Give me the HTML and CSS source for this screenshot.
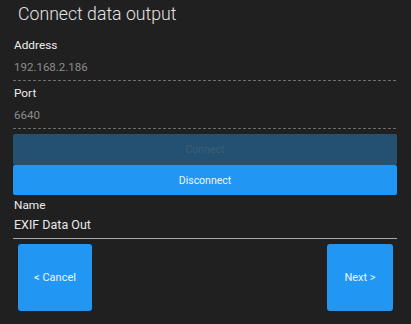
FILE: index.html
```html
<!DOCTYPE html>
<html>
<head>
<meta charset="utf-8">
<link rel="stylesheet" href="styles.css">
</head>
<body>
<div class="page">
  <div class="title">Connect data output</div>
  <div class="form">
    <div class="field dashed">
      <div class="label">Address</div>
      <div class="value">192.168.2.186</div>
    </div>
    <div class="field dashed">
      <div class="label">Port</div>
      <div class="value">6640</div>
    </div>
    <div class="actions">
      <div class="btn connect">Connect</div>
      <div class="btn disconnect">Disconnect</div>
    </div>
    <div class="field solid">
      <div class="label">Name</div>
      <div class="value name">EXIF Data Out</div>
    </div>
    <div class="nav">
      <div class="navbtn cancel">&lt; Cancel</div>
      <div class="navbtn next">Next &gt;</div>
    </div>
  </div>
</div>
</body>
</html>
```
FILE: styles.css
```css
html, body {
  margin: 0;
  padding: 0;
  background: #202020;
}
body {
  width: 411px;
  height: 324px;
  overflow: hidden;
  font-family: "Roboto", "Open Sans", sans-serif;
  color: #e8e8e8;
}
.title {
  height: 35px;
  line-height: 28px;
  padding-left: 18px;
  font-size: 17.7px;
  font-weight: 300;
  color: #e4e4e4;
}
.form {
  padding: 0 14px 0 13px;
}
.field {
  padding-bottom: 3px;
}
.dashed {
  background-image: repeating-linear-gradient(to right, #6e6e6e 0 3px, transparent 3px 5px);
  background-size: 100% 1px;
  background-repeat: no-repeat;
  background-position: left bottom;
  padding-bottom: 4px;
}
.dashed + .dashed {
  margin-top: 2px;
}
.solid {
  border-bottom: 1px solid #a8a8a8;
}
.label {
  line-height: 20px;
  font-size: 11.8px;
  padding-left: 1px;
  color: #ececec;
}
.value {
  line-height: 20px;
  margin-top: 2px;
  font-size: 11.5px;
  padding-left: 1px;
  color: #8c8c8c;
}
.value.name {
  margin-top: 0;
  font-size: 12.5px;
  color: #e8e8e8;
}
.actions {
  margin-top: 5px;
  display: flex;
  flex-direction: column;
}
.btn {
  display: flex;
  align-items: center;
  justify-content: center;
  font-size: 10.5px;
  border-radius: 2px;
}
.connect {
  height: 31px;
  background: #245172;
  color: #3f5e75;
}
.disconnect {
  height: 30px;
  background: #2196f3;
  color: #eef5fc;
}
.nav {
  margin-top: 5px;
  display: flex;
  justify-content: space-between;
  padding: 0 4px 0 5px;
}
.navbtn {
  height: 67px;
  background: #2196f3;
  border-radius: 3px;
  display: flex;
  align-items: center;
  justify-content: center;
  font-size: 11px;
  color: #eef5fc;
}
.cancel {
  width: 74px;
}
.next {
  width: 66px;
}
```
